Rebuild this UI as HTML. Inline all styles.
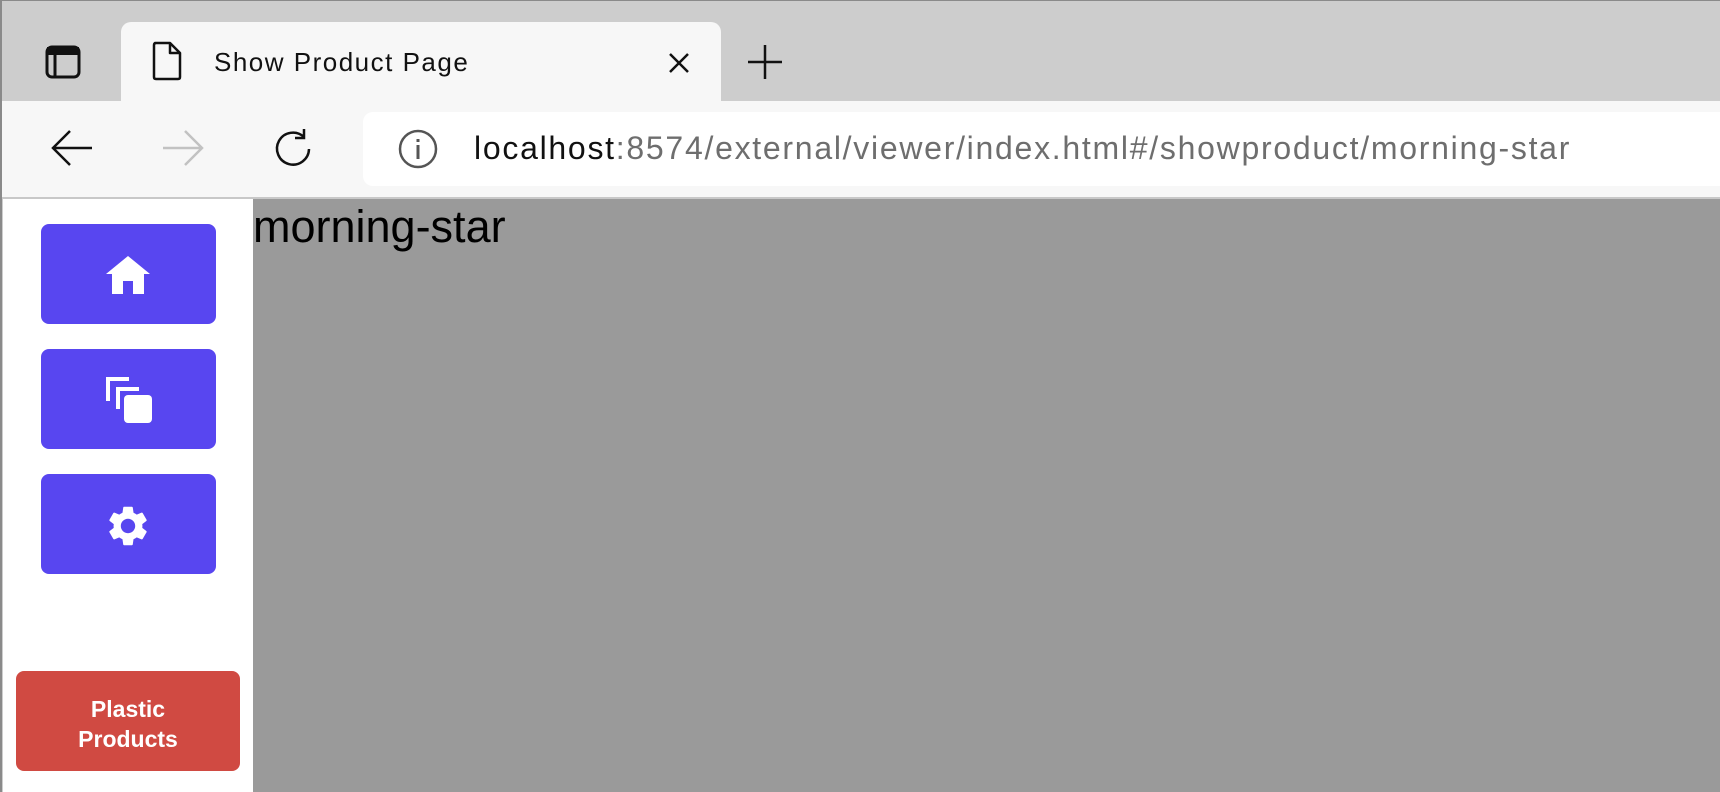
<!DOCTYPE html>
<html><head><style>
*{margin:0;padding:0;box-sizing:border-box}
body{width:1720px;height:792px;overflow:hidden;position:relative;background:#cdcdcd;font-family:"Liberation Sans",sans-serif}
.abs{position:absolute}
</style></head><body>
<div class="abs" style="left:0;top:0;width:1720px;height:1px;background:#8a8a8a"></div>
<div class="abs" style="left:0;top:0;width:2px;height:792px;background:#8a8a8a"></div>
<svg class="abs" style="left:44px;top:44px" width="38" height="36" viewBox="0 0 38 36"><rect x="3" y="3" width="32" height="30" rx="5" fill="none" stroke="#111" stroke-width="3"/><rect x="3" y="3" width="32" height="8" fill="#111"/><line x1="11" y1="10" x2="11" y2="33" stroke="#111" stroke-width="3"/></svg>
<div class="abs" style="left:121px;top:22px;width:600px;height:80px;background:#f7f7f7;border-radius:10px 10px 0 0"></div>
<svg class="abs" style="left:151px;top:41px" width="32" height="40" viewBox="0 0 32 40"><path d="M4 2 H19 L29 12 V36 Q29 38 27 38 H5 Q3 38 3 36 V4 Q3 2 5 2 Z M19 2 V12 H29" fill="none" stroke="#111" stroke-width="2.5" stroke-linejoin="round"/></svg>
<div class="abs" style="left:214px;top:47px;font-size:26px;color:#111;letter-spacing:1.5px">Show Product Page</div>
<svg class="abs" style="left:667px;top:51px" width="24" height="24" viewBox="0 0 24 24"><path d="M3 3 L21 21 M21 3 L3 21" stroke="#111" stroke-width="2.5"/></svg>
<svg class="abs" style="left:746px;top:43px" width="38" height="38" viewBox="0 0 38 38"><path d="M19 2 V36 M2 19 H36" stroke="#111" stroke-width="2.5"/></svg>
<div class="abs" style="left:2px;top:101px;width:1718px;height:97px;background:#f7f7f7"></div>
<div class="abs" style="left:2px;top:197px;width:1718px;height:2px;background:#c8c8c8"></div>
<svg class="abs" style="left:50px;top:128px" width="44" height="40" viewBox="0 0 44 40"><path d="M42 20 H4 M20 3 L3 20 L20 37" fill="none" stroke="#111" stroke-width="2.5"/></svg>
<svg class="abs" style="left:161px;top:128px" width="44" height="40" viewBox="0 0 44 40"><path d="M2 20 H40 M24 3 L41 20 L24 37" fill="none" stroke="#c2c2c2" stroke-width="2.5"/></svg>
<svg class="abs" style="left:271px;top:127px" width="44" height="44" viewBox="0 0 44 44"><path d="M33 10 A16 16 0 1 0 38 22" fill="none" stroke="#111" stroke-width="2.5"/><path d="M33 2 V11 H24" fill="none" stroke="#111" stroke-width="2.5"/></svg>
<div class="abs" style="left:363px;top:112px;width:1380px;height:74px;background:#fff;border-radius:10px"></div>
<svg class="abs" style="left:397px;top:128px" width="42" height="42" viewBox="0 0 42 42"><circle cx="21" cy="21" r="18" fill="none" stroke="#555" stroke-width="2.5"/><rect x="19.5" y="17" width="3" height="14" fill="#555"/><rect x="19.5" y="11" width="3" height="3" fill="#555"/></svg>
<div class="abs" style="left:474px;top:130px;font-size:32px;color:#111;white-space:nowrap;letter-spacing:1.72px">localhost<span style="color:#6e6e6e">:8574/external/viewer/index.html#/showproduct/morning-star</span></div>
<div class="abs" style="left:3px;top:199px;width:250px;height:593px;background:#fff"></div>
<div class="abs" style="left:253px;top:199px;width:1467px;height:593px;background:#9a9a9a"></div>
<div class="abs" style="left:253px;top:202px;font-size:45px;line-height:50px;color:#000">morning-star</div>
<div class="abs" style="left:41px;top:224px;width:175px;height:100px;background:#5846f0;border-radius:8px"></div>
<svg class="abs" style="left:105px;top:254px" width="46" height="42" viewBox="0 0 46 42"><path d="M23 2 L45 20 H39 V40 H28 V27 H18 V40 H7 V20 H1 Z" fill="#fff"/></svg>
<div class="abs" style="left:41px;top:349px;width:175px;height:100px;background:#5846f0;border-radius:8px"></div>
<svg class="abs" style="left:103px;top:374px" width="50" height="50" viewBox="0 0 50 50"><path d="M3 27 V3 H26 V7 H7 V27 Z" fill="#fff"/><path d="M13 35 V13 H36 V17 H17 V35 Z" fill="#fff"/><rect x="21" y="21" width="28" height="28" rx="4" fill="#fff"/></svg>
<div class="abs" style="left:41px;top:474px;width:175px;height:100px;background:#5846f0;border-radius:8px"></div>
<svg class="abs" style="left:104px;top:502px" width="48" height="48" viewBox="0 0 24 24"><path fill="#fff" d="M19.14 12.94c.04-.3.06-.61.06-.94 0-.32-.02-.64-.07-.94l2.03-1.58a.49.49 0 0 0 .12-.61l-1.92-3.32a.488.488 0 0 0-.59-.22l-2.39.96c-.5-.38-1.03-.7-1.62-.94l-.36-2.54a.484.484 0 0 0-.48-.41h-3.84c-.24 0-.43.17-.47.41l-.36 2.54c-.59.24-1.13.57-1.62.94l-2.39-.96c-.22-.08-.47 0-.59.22L2.74 8.87c-.12.21-.08.47.12.61l2.03 1.58c-.05.3-.09.63-.09.94s.02.64.07.94l-2.03 1.58a.49.49 0 0 0-.12.61l1.92 3.32c.12.22.37.29.59.22l2.39-.96c.5.38 1.03.7 1.62.94l.36 2.54c.05.24.24.41.48.41h3.84c.24 0 .44-.17.47-.41l.36-2.54c.59-.24 1.13-.56 1.62-.94l2.39.96c.22.08.47 0 .59-.22l1.92-3.32c.12-.22.07-.47-.12-.61l-2.01-1.58zM12 15.6c-1.98 0-3.6-1.62-3.6-3.6s1.62-3.6 3.6-3.6 3.6 1.62 3.6 3.6-1.62 3.6-3.6 3.6z"/></svg>
<div class="abs" style="left:16px;top:671px;width:224px;height:100px;background:#d04a42;border-radius:8px;color:#fff;font-weight:bold;font-size:23px;line-height:30px;text-align:center;padding-top:23px">Plastic<br>Products</div>
</body></html>
